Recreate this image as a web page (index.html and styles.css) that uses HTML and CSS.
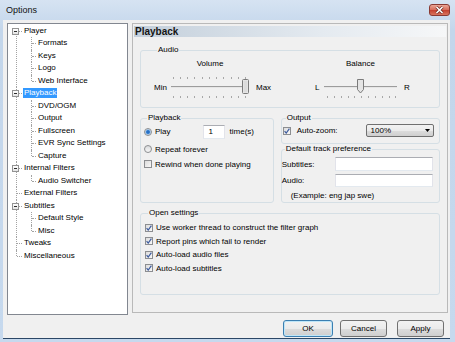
FILE: index.html
```html
<!DOCTYPE html>
<html lang="en">
<head>
  <meta charset="UTF-8" />
  <title>Options</title>
  <link rel="stylesheet" href="styles.css">
</head>
<body>
  <div class="window">
    <div class="titlebar">
      <span class="title">Options</span>
      <span class="close">
        <svg width="9" height="8" viewBox="0 0 9 8">
          <path d="M1.5 1l6 6M7.5 1l-6 6" stroke="#6b2a22" stroke-width="3" />
          <path d="M1.5 1l6 6M7.5 1l-6 6" stroke="#fff" stroke-width="1.6" />
        </svg>
      </span>
    </div>

    <div class="client">
      <div class="main">
        <ul class="tree">
          <li><div class="item"><span class="box"></span><span class="label">Player</span></div>
            <ul>
              <li><div class="item"><span class="label">Formats</span></div></li>
              <li><div class="item"><span class="label">Keys</span></div></li>
              <li><div class="item"><span class="label">Logo</span></div></li>
              <li><div class="item"><span class="label">Web Interface</span></div></li>
            </ul>
          </li>
          <li><div class="item"><span class="box"></span><span class="label selected">Playback</span></div>
            <ul>
              <li><div class="item"><span class="label">DVD/OGM</span></div></li>
              <li><div class="item"><span class="label">Output</span></div></li>
              <li><div class="item"><span class="label">Fullscreen</span></div></li>
              <li><div class="item"><span class="label">EVR Sync Settings</span></div></li>
              <li><div class="item"><span class="label">Capture</span></div></li>
            </ul>
          </li>
          <li><div class="item"><span class="box"></span><span class="label">Internal Filters</span></div>
            <ul>
              <li><div class="item"><span class="label">Audio Switcher</span></div></li>
            </ul>
          </li>
          <li><div class="item"><span class="label">External Filters</span></div></li>
          <li><div class="item"><span class="box"></span><span class="label">Subtitles</span></div>
            <ul>
              <li><div class="item"><span class="label">Default Style</span></div></li>
              <li><div class="item"><span class="label">Misc</span></div></li>
            </ul>
          </li>
          <li><div class="item"><span class="label">Tweaks</span></div></li>
          <li><div class="item"><span class="label">Miscellaneous</span></div></li>
        </ul>

        <div class="page">
          <div class="page-head">Playback</div>

          <fieldset class="group audio">
            <legend>Audio</legend>
            <div class="sliders">
              <div class="slider volume">
                <span class="slider-name">Volume</span>
                <span class="end">Min</span>
                <svg width="82" height="26" viewBox="0 0 82 26">
                  <g fill="#a7a7a7">
                    <rect x="4" y="3" width="1" height="2" /><rect x="11" y="3" width="1" height="2" />
                    <rect x="18" y="3" width="1" height="2" /><rect x="25" y="3" width="1" height="2" />
                    <rect x="33" y="3" width="1" height="2" /><rect x="40" y="3" width="1" height="2" />
                    <rect x="47" y="3" width="1" height="2" /><rect x="54" y="3" width="1" height="2" />
                    <rect x="62" y="3" width="1" height="2" /><rect x="69" y="3" width="1" height="2" />
                    <rect x="76" y="3" width="1" height="2" />
                    <rect x="4" y="22" width="1" height="2" /><rect x="11" y="22" width="1" height="2" />
                    <rect x="18" y="22" width="1" height="2" /><rect x="25" y="22" width="1" height="2" />
                    <rect x="33" y="22" width="1" height="2" /><rect x="40" y="22" width="1" height="2" />
                    <rect x="47" y="22" width="1" height="2" /><rect x="54" y="22" width="1" height="2" />
                    <rect x="62" y="22" width="1" height="2" /><rect x="69" y="22" width="1" height="2" />
                    <rect x="76" y="22" width="1" height="2" />
                  </g>
                  <rect x="2" y="12" width="78" height="1" fill="#9c9c9c" />
                  <rect x="2" y="13" width="78" height="1" fill="#e6e6e6" />
                  <rect x="73.5" y="5.5" width="6" height="14" rx="1" fill="#ececec" stroke="#7b7b7b" />
                  <rect x="74.5" y="6.5" width="4" height="12" fill="#dcdcdc" />
                </svg>
                <span class="end max">Max</span>
              </div>
              <div class="slider balance">
                <span class="slider-name">Balance</span>
                <span class="end">L</span>
                <svg width="77" height="26" viewBox="0 0 77 26">
                  <g fill="#a7a7a7">
                    <rect x="5" y="22" width="1" height="2" /><rect x="12" y="22" width="1" height="2" />
                    <rect x="19" y="22" width="1" height="2" /><rect x="26" y="22" width="1" height="2" />
                    <rect x="32" y="22" width="1" height="2" /><rect x="39" y="22" width="1" height="2" />
                    <rect x="46" y="22" width="1" height="2" /><rect x="53" y="22" width="1" height="2" />
                    <rect x="60" y="22" width="1" height="2" /><rect x="67" y="22" width="1" height="2" />
                    <rect x="73" y="22" width="1" height="2" />
                  </g>
                  <rect x="2" y="12" width="73" height="1" fill="#9c9c9c" />
                  <rect x="2" y="13" width="73" height="1" fill="#e6e6e6" />
                  <path d="M35.5 5.5h6v10l-3 3.5l-3 -3.5z" fill="#e4e4e4" stroke="#7b7b7b" />
                </svg>
                <span class="end max">R</span>
              </div>
            </div>
          </fieldset>

          <div class="group-row">
            <fieldset class="group playback">
              <legend>Playback</legend>
              <div class="line play">
                <span class="radio on"></span><span class="text">Play</span>
                <span class="edit times">1</span><span>time(s)</span>
              </div>
              <div class="line repeat">
                <span class="radio"></span><span class="text">Repeat forever</span>
              </div>
              <div class="line rewind">
                <span class="check"></span><span class="text">Rewind when done playing</span>
              </div>
            </fieldset>

            <div class="group-col">
              <fieldset class="group output">
                <legend>Output</legend>
                <div class="line zoom">
                  <span class="check on"><svg width="6" height="6" viewBox="0 0 6 6"><path d="M0.6 3.2l1.6 1.9l3.2 -4.4" fill="none" stroke="#3d5c9e" stroke-width="1.2" /></svg></span>
                  <span class="text wide">Auto-zoom:</span>
                  <span class="combo">100%<svg width="5" height="3" viewBox="0 0 5 3"><path d="M0 0h5l-2.5 3z" fill="#000" /></svg></span>
                </div>
              </fieldset>

              <fieldset class="group track">
                <legend>Default track preference</legend>
                <div class="line field first">
                  <span class="field-name">Subtitles:</span><span class="edit long"></span>
                </div>
                <div class="line field">
                  <span class="field-name">Audio:</span><span class="edit long short"></span>
                </div>
                <div class="example">(Example: eng jap swe)</div>
              </fieldset>
            </div>
          </div>

          <fieldset class="group open">
            <legend>Open settings</legend>
            <div class="line"><span class="check on"><svg width="6" height="6" viewBox="0 0 6 6"><path d="M0.6 3.2l1.6 1.9l3.2 -4.4" fill="none" stroke="#3d5c9e" stroke-width="1.2" /></svg></span><span class="text">Use worker thread to construct the filter graph</span></div>
            <div class="line"><span class="check on"><svg width="6" height="6" viewBox="0 0 6 6"><path d="M0.6 3.2l1.6 1.9l3.2 -4.4" fill="none" stroke="#3d5c9e" stroke-width="1.2" /></svg></span><span class="text">Report pins which fail to render</span></div>
            <div class="line"><span class="check on"><svg width="6" height="6" viewBox="0 0 6 6"><path d="M0.6 3.2l1.6 1.9l3.2 -4.4" fill="none" stroke="#3d5c9e" stroke-width="1.2" /></svg></span><span class="text">Auto-load audio files</span></div>
            <div class="line"><span class="check on"><svg width="6" height="6" viewBox="0 0 6 6"><path d="M0.6 3.2l1.6 1.9l3.2 -4.4" fill="none" stroke="#3d5c9e" stroke-width="1.2" /></svg></span><span class="text">Auto-load subtitles</span></div>
          </fieldset>
        </div>
      </div>

      <div class="buttons">
        <button class="btn default">OK</button>
        <button class="btn cancel">Cancel</button>
        <button class="btn apply">Apply</button>
      </div>
    </div>
  </div>
</body>
</html>
```

FILE: styles.css
```css
body {
  margin: 0;
  width: 455px;
  height: 342px;
  overflow: hidden;
  font-family: "Liberation Sans", Arial, sans-serif;
  font-size: 8px;
  color: #000;
  background: #c6d8ec;
}
.window {
  height: 342px;
  background: linear-gradient(#d6e3f2, #c3d6eb 30px, #c6d9ee);
}
.titlebar {
  height: 20px;
  display: flex;
  align-items: center;
  justify-content: space-between;
  padding: 0 5px 0 6px;
}
.title {
  font-size: 9px;
  color: #111;
}
.close {
  width: 21px;
  height: 12px;
  box-sizing: border-box;
  border: 1px solid #8a3a33;
  border-radius: 3px;
  background: linear-gradient(#eaa797, #d8705f 45%, #c64433 55%, #d8755e);
  display: flex;
  align-items: center;
  justify-content: center;
}
.close svg {
  display: block;
}

.client {
  margin: 0 5px 0 3px;
  height: 319px;
  box-sizing: border-box;
  padding: 3px 2px 0 4px;
  background: #f0f0f0;
  border-bottom: 1px solid #2b4766;
}
.main {
  display: flex;
  align-items: flex-start;
}

/* tree */
.tree, .tree ul {
  list-style: none;
  margin: 0;
  padding: 0;
}
.tree {
  width: 120px;
  height: 289.5px;
  padding-top: 0.5px;
  border: 1px solid #828790;
  background: #fff;
}
.tree li {
  position: relative;
}
.tree > li {
  padding-left: 15px;
}
.tree ul > li {
  padding-left: 14px;
}
.tree li::before {
  content: "";
  position: absolute;
  left: 8px;
  top: 0;
  bottom: 0;
  border-left: 1px dotted #a3a3a3;
}
.tree > li:first-child::before {
  top: 6px;
}
.tree li:last-child::before {
  bottom: auto;
  height: 6px;
}
.tree li::after {
  content: "";
  position: absolute;
  left: 9px;
  top: 6px;
  width: 5px;
  border-top: 1px dotted #a3a3a3;
}
.tree ul > li::after {
  width: 4px;
}
.item {
  height: 12.5px;
  display: flex;
  align-items: center;
}
.label {
  padding: 0 1px;
  line-height: 10px;
  white-space: nowrap;
}
.label.selected {
  background: #3399ff;
  color: #fff;
}
.box {
  position: absolute;
  z-index: 1;
  left: 4px;
  top: 3px;
  width: 7px;
  height: 7px;
  box-sizing: border-box;
  border: 1px solid #939393;
  background: linear-gradient(#fff, #e4e4e4);
}
.box::after {
  content: "";
  position: absolute;
  left: 1px;
  top: 2px;
  width: 3px;
  height: 1px;
  background: #2c2c2c;
}

/* page */
.page {
  width: 314px;
  height: 288px;
  margin-left: 4px;
  border: 1px solid #b9b9b9;
}
.page-head {
  margin: 2px 1px 0;
  height: 11px;
  line-height: 11px;
  padding-left: 1px;
  font-size: 10px;
  font-weight: bold;
  color: #141414;
  background: linear-gradient(to right, #c3cfdb, #e4eaf0 60%, #f6f7f8);
}
.group {
  margin: 0 7px;
  padding: 0;
  border: 1px solid #d5dfe5;
  border-radius: 3px;
  min-width: 0;
}
.group legend {
  margin-left: 3px;
  padding: 0 1px;
  line-height: 10px;
}
.audio {
  margin-top: 8px;
  padding: 4px 0 7px 13px;
}
.sliders {
  display: flex;
}
.slider {
  display: grid;
  grid-template-rows: 10px 26px;
  row-gap: 5px;
  align-items: center;
}
.slider-name {
  grid-column: 2;
  text-align: center;
  line-height: 10px;
}
.slider .end {
  grid-row: 2;
}
.slider svg {
  grid-row: 2;
  display: block;
}
.volume {
  width: 120px;
  grid-template-columns: 15px 82px auto;
}
.balance {
  margin-left: 41px;
  grid-template-columns: 7px 77px auto;
}
.slider .max {
  padding-left: 5px;
}

.group-row {
  display: flex;
  margin: 5px 7px 0;
}
.group-row .group {
  margin: 0;
}
.playback {
  width: 130px;
  padding: 0 0 0 3px;
}
.group-col {
  width: 161px;
  margin-left: 7px;
}
.line {
  display: flex;
  align-items: center;
  height: 14px;
}
.line .text {
  margin-left: 3px;
}
.play {
  height: 15px;
  margin-top: 1px;
}
.repeat {
  margin-top: 3px;
}
.rewind {
  margin-top: 1px;
}
.radio {
  width: 8px;
  height: 8px;
  box-sizing: border-box;
  border: 1px solid #8c8e91;
  border-radius: 50%;
  background: linear-gradient(#d9dbdd, #f7f7f7);
}
.radio.on {
  background: radial-gradient(circle, #1d5fb8 0, #3b84d2 1.6px, #a7c9ec 2.4px, #e6ecf2 3.4px);
}
.check {
  width: 8px;
  height: 8px;
  box-sizing: border-box;
  border: 1px solid #8c8e91;
  background: linear-gradient(135deg, #dcdcdc, #f8f8f8);
  display: flex;
  align-items: center;
  justify-content: center;
}
.check svg {
  display: block;
}
.edit {
  height: 14px;
  box-sizing: border-box;
  border: 1px solid #abadb3;
  border-color: #abadb3 #e2e3ea #e3e9ef #e2e3ea;
  background: #fff;
  line-height: 12px;
}
.times {
  width: 22px;
  margin-left: 32px;
  margin-right: 5px;
  padding-left: 5px;
}
.output {
  padding: 0 0 6px 1px;
}
.zoom {
  height: 13px;
  margin-top: 1px;
}
.zoom .text {
  margin-left: 6px;
}
.combo {
  width: 68px;
  height: 13px;
  margin-left: 28px;
  box-sizing: border-box;
  padding: 0 3px 0 4px;
  border: 1px solid #707070;
  border-radius: 2px;
  background: linear-gradient(#f2f2f2, #ebebeb 50%, #dddddd 50%, #cfcfcf);
  display: flex;
  align-items: center;
  justify-content: space-between;
}
.track {
  margin-top: 4px;
  padding: 0 0 1px 0;
}
.field.first {
  margin-top: 3px;
}
.field {
  margin-top: 2px;
}
.field-name {
  width: 53px;
}
.edit.long {
  width: 98px;
}
.edit.short {
  height: 13px;
}
.example {
  margin: 4px 0 0 9px;
  line-height: 10px;
}
.open {
  margin-top: 5px;
  height: 82px;
  padding: 3px 0 0 4px;
}
.open .line {
  height: 13.5px;
}
.buttons {
  display: flex;
  justify-content: flex-end;
  margin-top: 5px;
  padding-right: 4px;
}
.btn {
  height: 17px;
  padding: 0;
  font-family: inherit;
  font-size: 8px;
  color: #000;
  border: 1px solid #707070;
  border-radius: 3px;
  background: linear-gradient(#f2f2f2, #ebebeb 50%, #dddddd 50%, #cfcfcf);
}
.btn.default {
  width: 50px;
  border-color: #3c7fb1;
  box-shadow: inset 0 0 0 1px #bfe6f8;
}
.btn.cancel {
  width: 47px;
  margin-left: 7px;
}
.btn.apply {
  width: 47px;
  margin-left: 10px;
}
```
